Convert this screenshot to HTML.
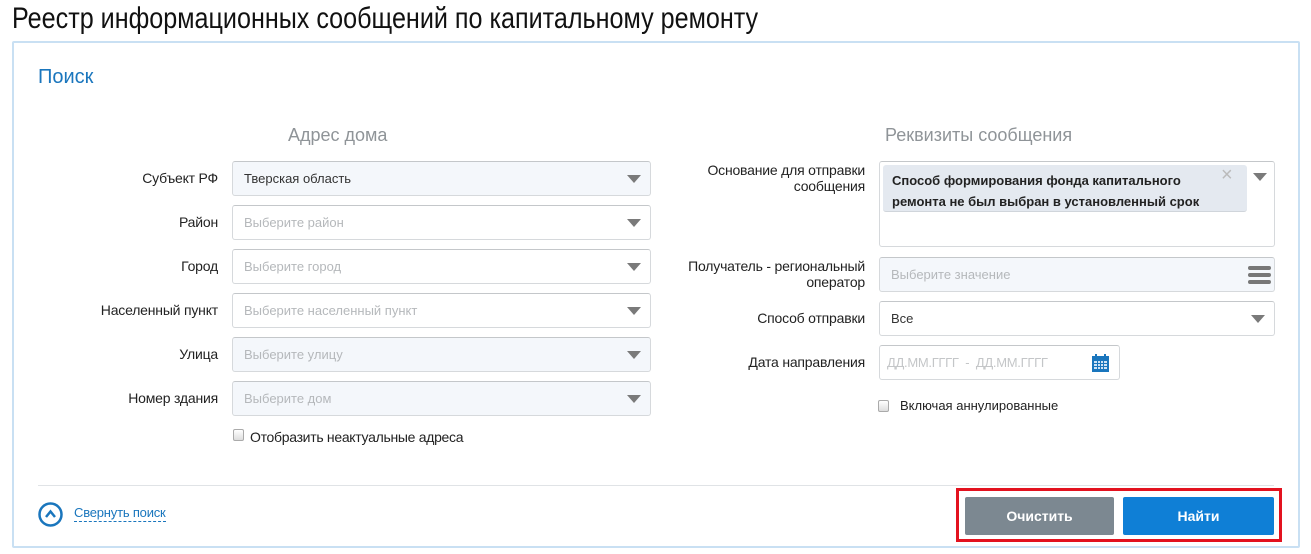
<!DOCTYPE html>
<html><head><meta charset="utf-8"><style>
*{box-sizing:border-box;margin:0;padding:0}
body{width:1311px;height:554px;background:#fff;position:relative;overflow:hidden;font-family:"Liberation Sans",sans-serif;color:#222}
.a{position:absolute}
.t{left:12px;top:0;font-size:30px;line-height:38px;color:#111;transform:scaleX(0.838);transform-origin:0 0;white-space:nowrap}
.panel{left:12px;top:41px;width:1288px;height:507px;border:2px solid #c9e0f3;border-radius:2px}
.lbl{font-size:14px;text-align:right;line-height:16px;letter-spacing:-0.2px}
.in{border:1px solid #d6d9dc;border-top-color:#c4c7ca;border-radius:3px;background:#fff;font-size:13px;color:#b5b8bb;padding-left:11px;line-height:34px}
.g{background:#f4f7fb}
.tri{position:absolute;right:9px;top:13px;width:0;height:0;border-left:7px solid transparent;border-right:7px solid transparent;border-top:8px solid #7a7a7a}
.h{font-size:18px;color:#8f9498}
.cb{width:11px;height:12px;border:1px solid #aaa;border-radius:2px;background:linear-gradient(#fff,#ddd)}
.btn{height:38px;line-height:38px;text-align:center;color:#fff;font-size:14px;font-weight:bold;border-radius:2px}
</style></head><body>
<div class="a t">Реестр информационных сообщений по капитальному ремонту</div>
<div class="a panel"></div>
<div class="a" style="left:38px;top:66px;font-size:20px;color:#1a76bd">Поиск</div>
<div class="a h" style="left:288px;top:125px">Адрес дома</div>
<div class="a h" style="left:885px;top:125px">Реквизиты сообщения</div>

<div class="a lbl" style="left:60px;width:158px;top:170px">Субъект РФ</div>
<div class="a in g" style="left:232px;top:161px;width:419px;height:35px;color:#333">Тверская область<span class="tri"></span></div>
<div class="a lbl" style="left:60px;width:158px;top:214px">Район</div>
<div class="a in" style="left:232px;top:205px;width:419px;height:35px">Выберите район<span class="tri"></span></div>
<div class="a lbl" style="left:60px;width:158px;top:258px">Город</div>
<div class="a in" style="left:232px;top:249px;width:419px;height:35px">Выберите город<span class="tri"></span></div>
<div class="a lbl" style="left:60px;width:158px;top:302px">Населенный пункт</div>
<div class="a in" style="left:232px;top:293px;width:419px;height:35px">Выберите населенный пункт<span class="tri"></span></div>
<div class="a lbl" style="left:60px;width:158px;top:346px">Улица</div>
<div class="a in g" style="left:232px;top:337px;width:419px;height:35px">Выберите улицу<span class="tri"></span></div>
<div class="a lbl" style="left:60px;width:158px;top:390px">Номер здания</div>
<div class="a in g" style="left:232px;top:381px;width:419px;height:35px">Выберите дом<span class="tri"></span></div>
<div class="a cb" style="left:233px;top:429px"></div>
<div class="a" style="left:250px;top:429px;font-size:14px;letter-spacing:-0.3px">Отобразить неактуальные адреса</div>

<div class="a lbl" style="left:660px;width:205px;top:162px">Основание для отправки<br>сообщения</div>
<div class="a in" style="left:879px;top:161px;width:396px;height:86px"></div>
<div class="a" style="left:883px;top:165px;width:364px;height:47px;background:#e4e9f0;border-radius:3px;border-bottom:1px solid #d0d5db;font-size:13px;font-weight:bold;color:#222;padding:5px 0 0 9px;line-height:21px">Способ формирования фонда капитального<br>ремонта не был выбран в установленный срок</div>
<div class="a" style="left:1221px;top:164px;color:#bbb;font-size:20px">×</div>
<div class="a" style="left:1253px;top:173px;border-left:7px solid transparent;border-right:7px solid transparent;border-top:8px solid #7a7a7a;width:0;height:0"></div>
<div class="a lbl" style="left:660px;width:205px;top:258px">Получатель - региональный<br>оператор</div>
<div class="a in g" style="left:879px;top:257px;width:396px;height:35px">Выберите значение
<span style="position:absolute;right:3px;top:8px;width:23px;height:4px;border-radius:2px;background:#777;box-shadow:0 7px 0 #777,0 14px 0 #777"></span></div>
<div class="a lbl" style="left:660px;width:205px;top:310px">Способ отправки</div>
<div class="a in" style="left:879px;top:301px;width:396px;height:35px;color:#333">Все<span class="tri"></span></div>
<div class="a lbl" style="left:660px;width:205px;top:354px">Дата направления</div>
<div class="a in" style="left:879px;top:345px;width:241px;height:35px;color:#c4c6c8;padding-left:7px;letter-spacing:-0.3px">ДД.ММ.ГГГГ&nbsp; - &nbsp;ДД.ММ.ГГГГ
<svg style="position:absolute;left:212px;top:8px" width="17" height="18" viewBox="0 0 17 18"><rect x="0" y="2" width="17" height="16" fill="#1a76bd"/><rect x="3" y="0" width="2" height="4" fill="#1a76bd"/><rect x="12" y="0" width="2" height="4" fill="#1a76bd"/><g fill="#cfe3f5"><rect x="2" y="7" width="3" height="2"/><rect x="6" y="7" width="2" height="2"/><rect x="9" y="7" width="2" height="2"/><rect x="12" y="7" width="3" height="2"/><rect x="2" y="10" width="3" height="2"/><rect x="6" y="10" width="2" height="2"/><rect x="9" y="10" width="2" height="2"/><rect x="12" y="10" width="3" height="2"/><rect x="2" y="13" width="3" height="2"/><rect x="6" y="13" width="2" height="2"/><rect x="9" y="13" width="2" height="2"/><rect x="12" y="13" width="3" height="2"/></g></svg></div>
<div class="a cb" style="left:878px;top:400px"></div>
<div class="a" style="left:900px;top:398px;font-size:13px">Включая аннулированные</div>

<div class="a" style="left:38px;top:485px;width:1236px;height:1px;background:#e0e3e6"></div>
<svg class="a" style="left:38px;top:502px" width="25" height="25" viewBox="0 0 25 25"><circle cx="12.5" cy="12.5" r="11" fill="none" stroke="#1a76bd" stroke-width="2.5"/><path d="M8 15 L12.5 9.5 L17 15" fill="none" stroke="#1a76bd" stroke-width="2.5"/></svg>
<div class="a" style="left:74px;top:505px;font-size:13px;color:#1a76bd;border-bottom:1px dashed #1a76bd;line-height:16px;letter-spacing:-0.2px">Свернуть поиск</div>
<div class="a" style="left:956px;top:488px;width:326px;height:54px;border:3px solid #e3121f"></div>
<div class="a btn" style="left:965px;top:497px;width:149px;background:#7c8891">Очистить</div>
<div class="a btn" style="left:1123px;top:497px;width:151px;background:#0f7fd6">Найти</div>
</body></html>
